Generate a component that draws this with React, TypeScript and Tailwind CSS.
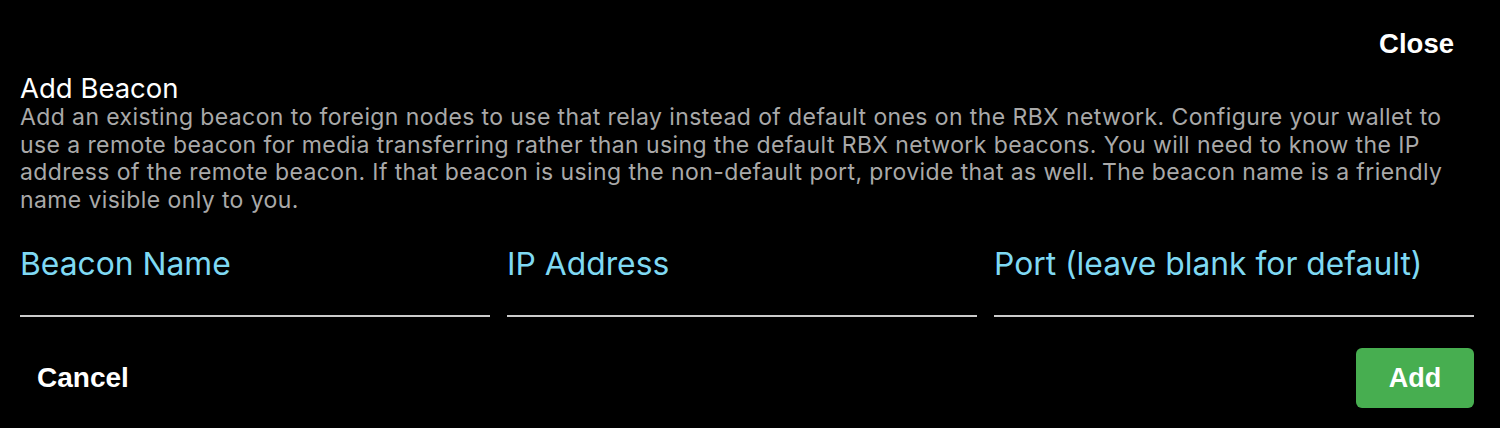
import * as React from "react"

const fields = ["Beacon Name", "IP Address", "Port (leave blank for default)"]

export default function App() {
    const [values, setValues] = React.useState<string[]>(["", "", ""])

    return (
        <div className="w-[1500px] h-[428px] bg-black pl-5 pr-[26px] pt-[26px] overflow-hidden">
            {/* Header */}
            <div className="flex justify-end h-[36px]">
                <button className="px-5 text-[27.5px] leading-[36px] font-bold text-white font-['Liberation_Sans',Arial,sans-serif]">
                    Close
                </button>
            </div>

            <div className="font-['Inter','Noto_Sans',sans-serif]">
                <h2 className="mt-[10px] text-[27.5px] leading-[32px] text-white">Add Beacon</h2>
                <p className="text-[23px] leading-[27.7px] tracking-[0.4px] text-[#a9a9a9]">
                    Add an existing beacon to foreign nodes to use that relay instead of default ones on the RBX network. Configure your wallet to
                    <br />
                    use a remote beacon for media transferring rather than using the default RBX network beacons. You will need to know the IP
                    <br />
                    address of the remote beacon. If that beacon is using the non-default port, provide that as well. The beacon name is a friendly
                    <br />
                    name visible only to you.
                </p>

                {/* Inputs */}
                <div className="grid grid-cols-[470px_470px_1fr] gap-[17px] mt-[29px]">
                    {fields.map((label, i) => (
                        <label key={label} className="flex flex-col">
                            <span className="text-[31.8px] leading-[40px] text-[#7fd9f3]">{label}</span>
                            <input
                                value={values[i]}
                                onChange={(e) => {
                                    const next = [...values]
                                    next[i] = e.target.value
                                    setValues(next)
                                }}
                                className="h-[33px] bg-transparent border-b-2 border-[#cbcbcb] text-white text-[20px] outline-none"
                            />
                        </label>
                    ))}
                </div>
            </div>

            {/* Footer */}
            <div className="flex items-center justify-between mt-[31px] font-['Liberation_Sans',Arial,sans-serif]">
                <button className="px-[17px] text-[28px] font-bold text-white">Cancel</button>
                <button className="w-[118px] h-[60px] rounded-[6px] bg-[#47ae50] text-[27px] font-bold text-white">
                    Add
                </button>
            </div>
        </div>
    )
}
